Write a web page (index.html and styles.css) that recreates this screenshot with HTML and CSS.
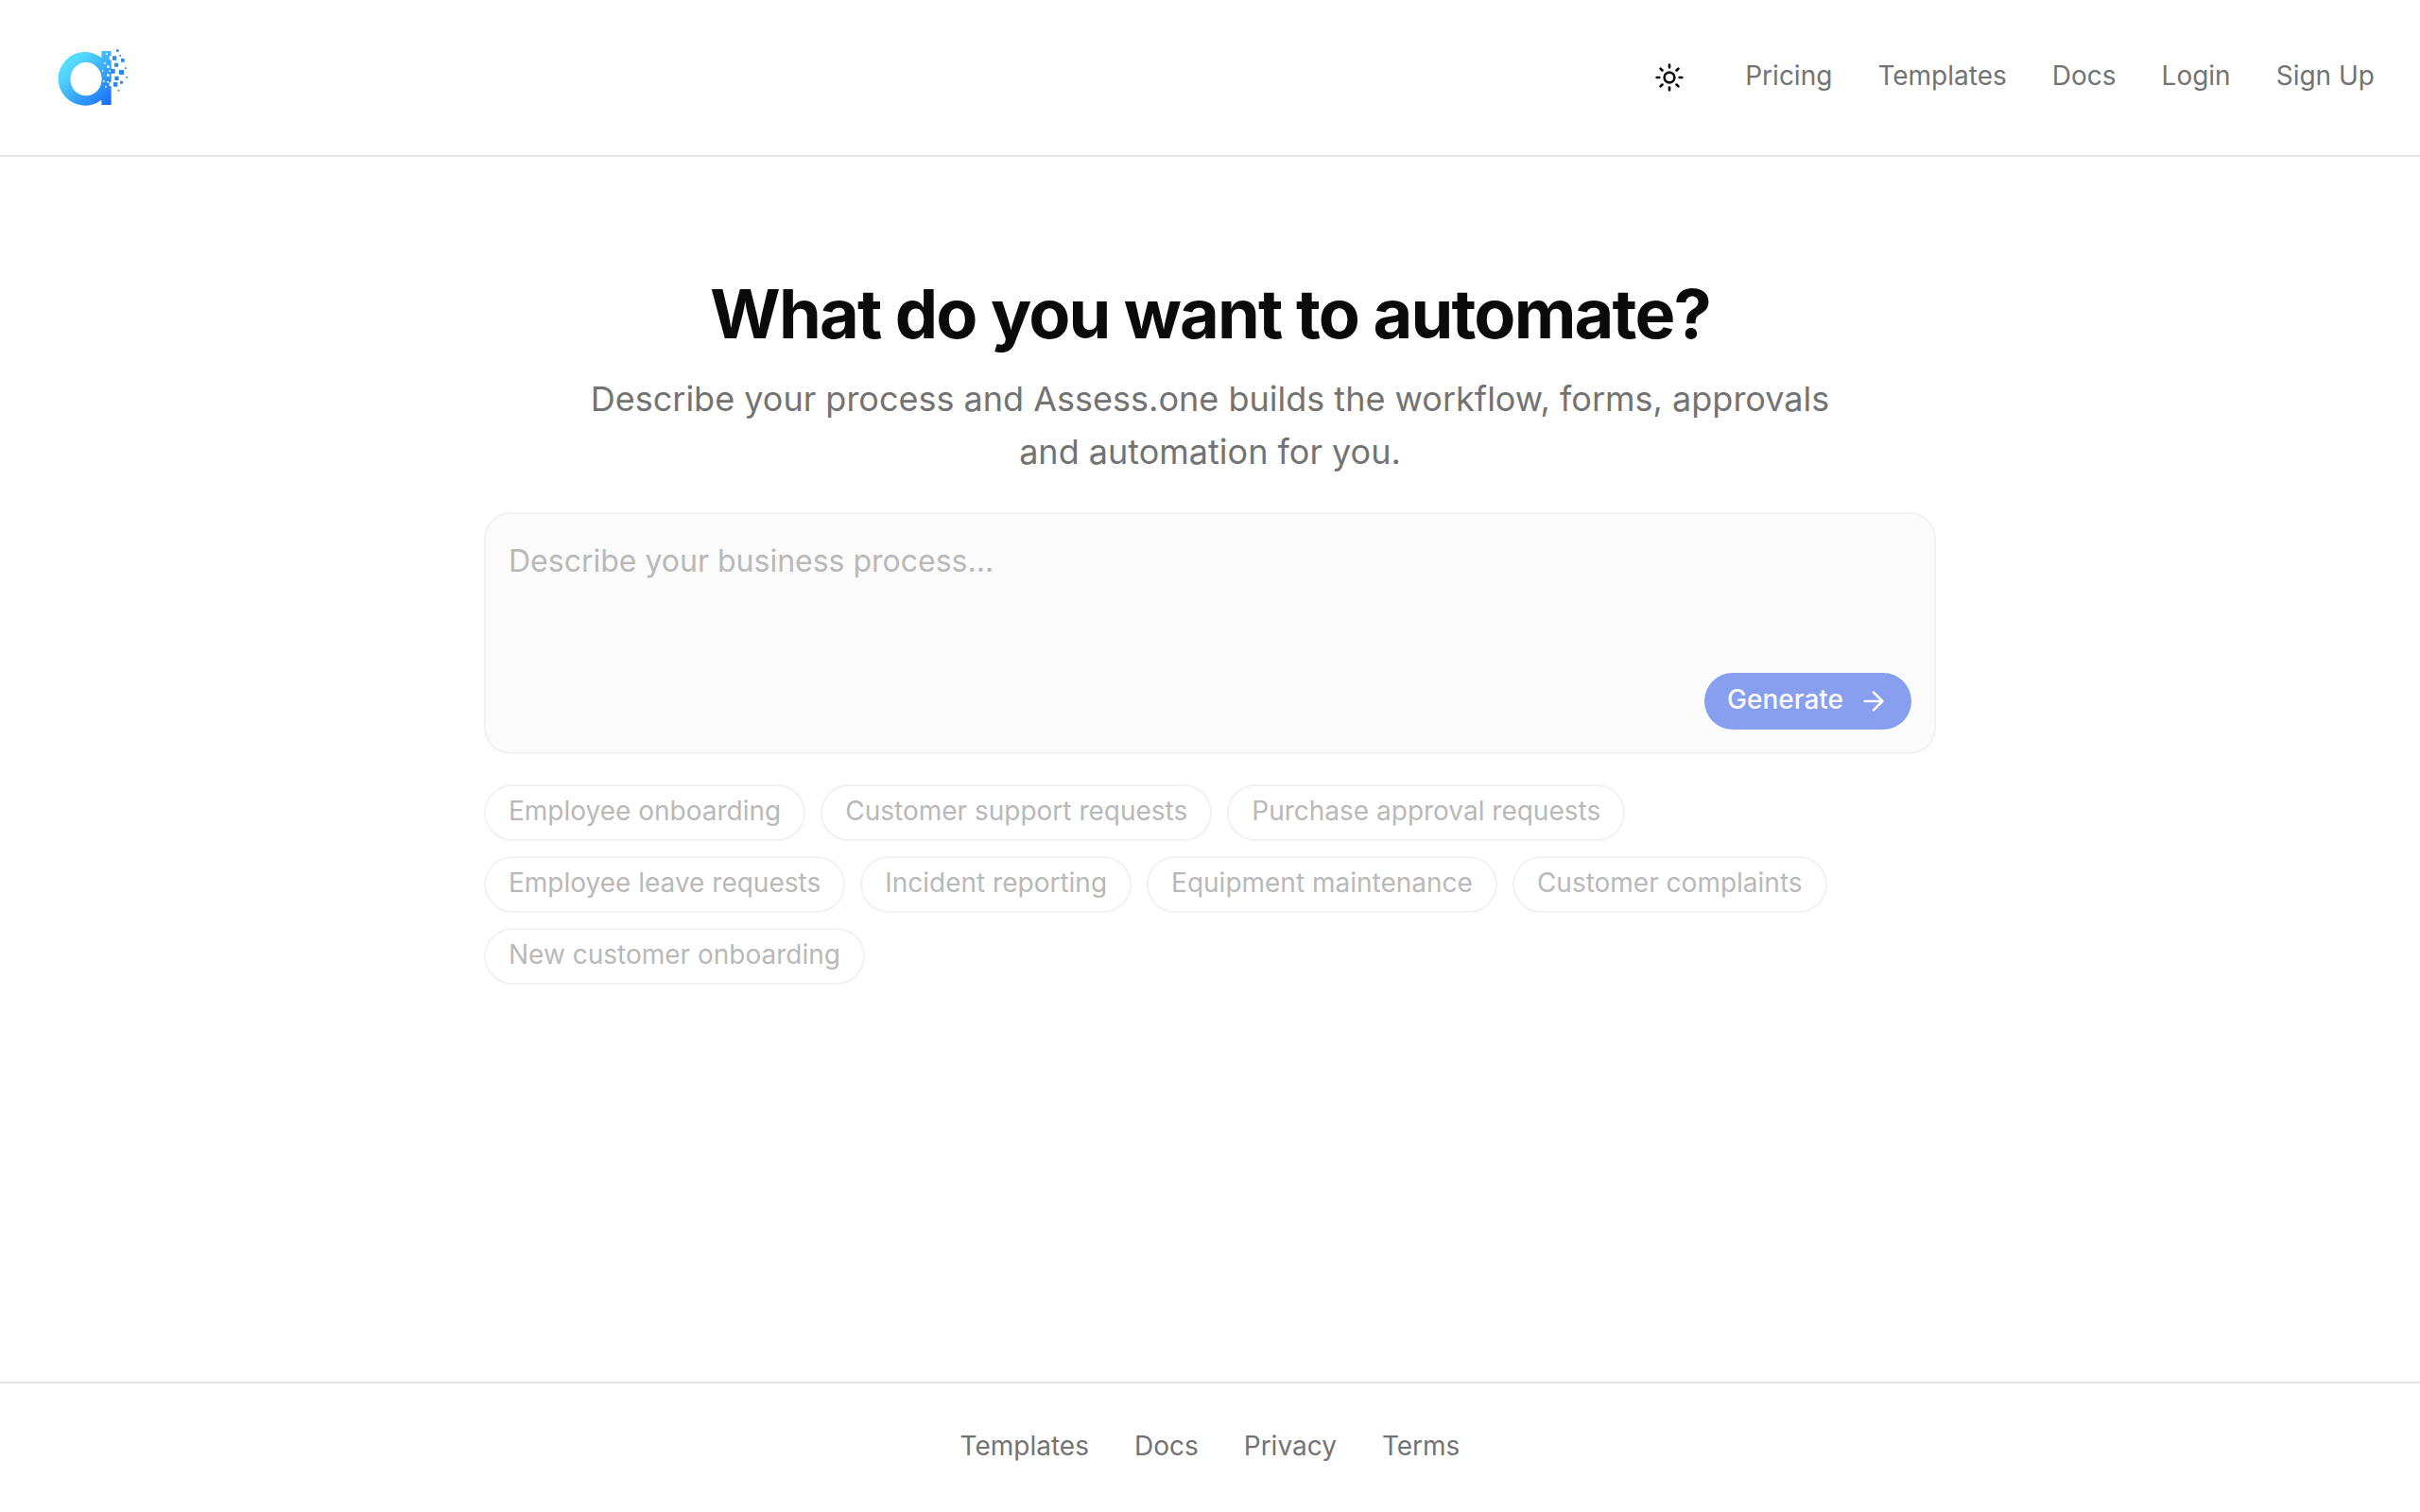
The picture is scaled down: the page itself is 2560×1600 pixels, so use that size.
FILE: index.html
```html
<!DOCTYPE html>
<html lang="en">
<head>
  <meta charset="utf-8">
  <title>Assess.one</title>
  <link rel="stylesheet" href="styles.css">
</head>
<body>
  <header class="site-header">
    <a class="logo" href="#" aria-label="Assess.one">
      <svg viewBox="60 54 240 204" width="80" height="68">
        <defs>
          <linearGradient id="logo-fill" x1="90" y1="80" x2="240" y2="240" gradientUnits="userSpaceOnUse">
            <stop offset="0" stop-color="#55e2ff"/>
            <stop offset="0.2" stop-color="#52d6ff"/>
            <stop offset="0.55" stop-color="#38a6f8"/>
            <stop offset="1" stop-color="#1668ff"/>
          </linearGradient>
        </defs>
        <path fill="url(#logo-fill)" fill-rule="evenodd" d="M233 72V88H227V100H233V172H227V184H233V243H202V227A85 85 0 1 1 202 93V72ZM153 108A50 53 0 1 0 153 214A50 53 0 1 0 153 108Z"/>
        <g fill="#fff">
          <rect x="216" y="79" width="5" height="5"/>
          <rect x="211" y="109" width="5" height="5"/>
          <rect x="219" y="118" width="8" height="8"/>
          <rect x="204" y="133" width="4" height="4"/>
          <rect x="226" y="133" width="5" height="5"/>
          <rect x="219" y="145" width="8" height="8"/>
          <rect x="207" y="165" width="5" height="5"/>
          <rect x="220" y="168" width="5" height="5"/>
          <rect x="213" y="183" width="5" height="5"/>
        </g>
        <g fill="#2a87fa">
          <rect x="249" y="67" width="8" height="8" rx="2"/>
          <rect x="237" y="88" width="13" height="13" rx="1"/>
          <rect x="259" y="84" width="5" height="5"/>
          <rect x="264" y="96" width="11" height="11" rx="1"/>
          <rect x="243" y="110" width="12" height="12" rx="1"/>
          <rect x="276" y="124" width="5" height="5"/>
          <rect x="231" y="129" width="14" height="14" rx="1"/>
          <rect x="258" y="132" width="15" height="15" rx="1"/>
          <rect x="280" y="153" width="5" height="5"/>
          <rect x="244" y="152" width="13" height="13" rx="1"/>
          <rect x="261" y="167" width="9" height="9" rx="1"/>
          <rect x="240" y="171" width="13" height="14" rx="1"/>
          <rect x="254" y="195" width="5" height="5"/>
        </g>
      </svg>
    </a>
    <nav class="main-nav">
      <button class="theme-toggle" type="button" aria-label="Toggle theme">
        <svg class="icon" viewBox="0 0 24 24">
          <circle cx="12" cy="12" r="4"/>
          <path d="M12 2v2M12 20v2M4.930 4.930l1.410 1.410M17.660 17.660l1.410 1.410M2 12h2M20 12h2M6.340 17.660l-1.410 1.410M19.070 4.930l-1.410 1.410"/>
        </svg>
      </button>
      <a href="#">Pricing</a>
      <a href="#">Templates</a>
      <a href="#">Docs</a>
      <a href="#">Login</a>
      <a href="#">Sign Up</a>
    </nav>
  </header>

  <main class="hero">
    <h1>What do you want to automate?</h1>
    <p class="subtitle">Describe your process and Assess.one builds the workflow, forms, approvals and automation for you.</p>

    <form class="prompt-form">
      <div class="prompt-box">
        <textarea class="prompt-input" aria-label="Business process" placeholder="Describe your business process..." disabled></textarea>
        <button class="generate" type="submit" disabled>
          <span>Generate</span>
          <svg class="icon" viewBox="0 0 24 24">
            <path d="M5 12h14M12 5l7 7-7 7"/>
          </svg>
        </button>
      </div>
      <div class="suggestions">
        <button type="button" disabled>Employee onboarding</button>
        <button type="button" disabled>Customer support requests</button>
        <button type="button" disabled>Purchase approval requests</button>
        <button type="button" disabled>Employee leave requests</button>
        <button type="button" disabled>Incident reporting</button>
        <button type="button" disabled>Equipment maintenance</button>
        <button type="button" disabled>Customer complaints</button>
        <button type="button" disabled>New customer onboarding</button>
      </div>
    </form>
  </main>

  <footer class="site-footer">
    <a href="#">Templates</a>
    <a href="#">Docs</a>
    <a href="#">Privacy</a>
    <a href="#">Terms</a>
  </footer>
</body>
</html>
```
FILE: styles.css
```css
* {
  box-sizing: border-box;
}
body {
  margin: 0;
  min-height: 100vh;
  display: flex;
  flex-direction: column;
  background-color: #fff;
  color: #0a0a0a;
  font-family: Inter, sans-serif;
  font-size: 28px;
  line-height: 36px;
}
a {
  color: #737373;
  text-decoration: none;
}
button,
textarea {
  font: inherit;
}
.icon {
  width: 32px;
  height: 32px;
  fill: none;
  stroke: currentColor;
  stroke-width: 2;
  stroke-linecap: round;
  stroke-linejoin: round;
}

/* header */
.site-header {
  display: flex;
  align-items: center;
  justify-content: space-between;
  padding: 48px;
  border-bottom: 2px solid #e5e5e5;
}
.logo {
  display: flex;
  padding-left: 12px;
}
.main-nav {
  display: flex;
  align-items: center;
  gap: 48px;
}
.main-nav a {
  padding-bottom: 4px;
}
.theme-toggle {
  display: flex;
  padding: 16px;
  border: none;
  background: none;
  color: #0a0a0a;
}

/* hero */
.hero {
  flex: 1;
  width: 100%;
  max-width: 1536px;
  margin: 0 auto;
  padding-top: 128px;
}
h1 {
  margin: 0 0 24px;
  font-size: 72px;
  line-height: 76px;
  font-weight: 700;
  letter-spacing: -0.025em;
  text-align: center;
}
.subtitle {
  max-width: 1344px;
  margin: 0 auto;
  color: #737373;
  font-size: 36px;
  line-height: 56px;
  text-align: center;
}
.prompt-form {
  margin-top: 36px;
}
.prompt-box {
  display: flex;
  flex-direction: column;
  padding: 24px;
  border: 2px solid #f2f2f2;
  border-radius: 28px;
  background-color: #fbfbfb;
}
.prompt-input {
  height: 144px;
  padding: 0;
  border: none;
  resize: none;
  background: none;
  font-size: 32px;
  line-height: 52px;
}
.prompt-input::placeholder {
  color: #b9b9b9;
}
.generate {
  display: flex;
  align-items: center;
  align-self: flex-end;
  gap: 16px;
  height: 60px;
  padding: 0 24px;
  border: none;
  border-radius: 30px;
  background-color: #889ff0;
  color: #fafafa;
  font-weight: 500;
}
.generate span {
  padding-bottom: 4px;
}
.suggestions {
  display: flex;
  flex-wrap: wrap;
  gap: 16px;
  margin-top: 32px;
}
.suggestions button {
  padding: 8px 24px 12px;
  border: 2px solid #f2f2f2;
  border-radius: 30px;
  background: none;
  color: #b9b9b9;
}

/* footer */
.site-footer {
  display: flex;
  justify-content: center;
  gap: 48px;
  padding: 48px 48px 52px;
  border-top: 2px solid #e5e5e5;
}
```
